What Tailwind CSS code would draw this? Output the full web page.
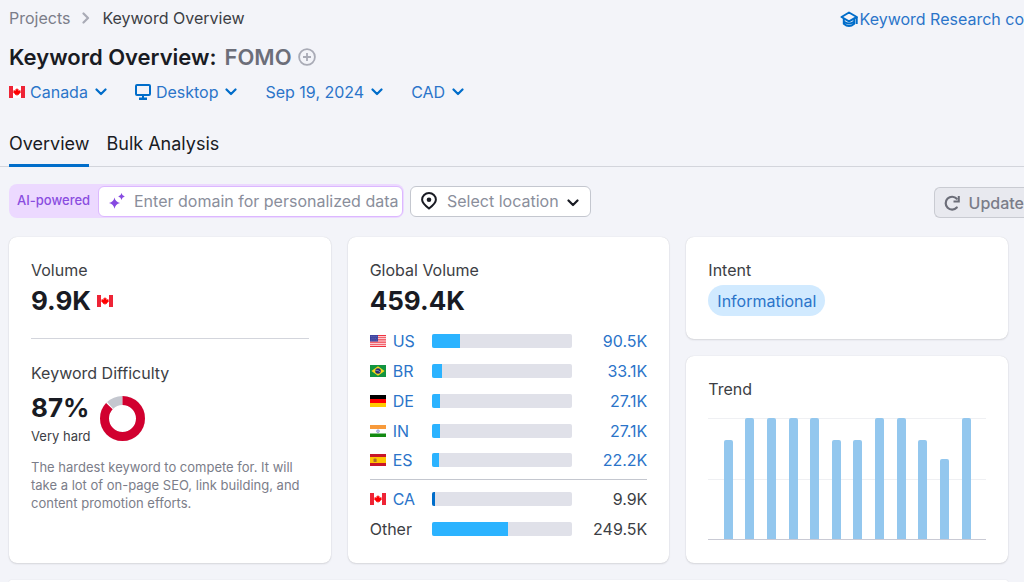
<!DOCTYPE html>
<html lang="en">
<head>
<meta charset="utf-8">
<meta name="viewport" content="width=device-width, initial-scale=1">
<title>Keyword Overview: FOMO</title>
<script src="https://cdn.jsdelivr.net/npm/@tailwindcss/browser@4"></script>
</head>
<body class="min-h-screen overflow-x-hidden bg-[#f3f4f9] font-[Inter,sans-serif] text-base text-[#3c3e44]">
<svg class="hidden" aria-hidden="true">
  <symbol id="chevron" viewBox="0 0 12 8"><path d="M1.500 1.500 6 6l4.500-4.500" fill="none" stroke="currentColor" stroke-width="2.200" stroke-linecap="round" stroke-linejoin="round"/></symbol>
  <symbol id="flag-ca" viewBox="0 0 16 12"><path fill="#fff" d="M0 0h16v12H0z"/><path fill="#ee2436" d="M0 0h4v12H0zM12 0h4v12h-4z"/><path fill="#f00" d="M8 2l.8 1.500.8-.4-.2 2 1.100-1 .3.700 1.100-.2-.5 1.500.5.400-2.200 1.700.2.800-1.600-.2V10h-.6V8.800L6.100 9l.2-.8-2.200-1.700.5-.4-.5-1.500 1.100.2.300-.7 1.100 1-.2-2 .8.400z"/></symbol>
  <symbol id="flag-us" viewBox="0 0 16 12"><path fill="#fff" d="M0 0h16v12H0z"/><path stroke="#ef3340" stroke-width="1.100" d="M0 .5h16M0 2.300h16M0 4.200h16M0 6h16M0 7.800h16M0 9.700h16M0 11.500h16"/><path fill="#3a3f9e" d="M0 0h8v6.500H0z"/><path stroke="#a9acd8" stroke-width=".7" stroke-dasharray=".7 1.200" d="M.8 1.300h7M1.700 3.200h6M.8 5.100h7"/></symbol>
  <symbol id="flag-br" viewBox="0 0 16 12"><path fill="#129440" d="M0 0h16v12H0z"/><path fill="#f8d71c" d="M8 1.300 14.600 6 8 10.700 1.400 6z"/><circle cx="8" cy="6" r="2.800" fill="#272e73"/><path d="M5.400 5.300q3-.5 5 1.800" fill="none" stroke="#b9c4dd" stroke-width=".6"/></symbol>
  <symbol id="flag-de" viewBox="0 0 16 12"><path d="M0 0h16v4H0z"/><path fill="#f00" d="M0 4h16v4H0z"/><path fill="#fc0" d="M0 8h16v4H0z"/></symbol>
  <symbol id="flag-in" viewBox="0 0 16 12"><path fill="#fff" d="M0 0h16v12H0z"/><path fill="#f79a3b" d="M0 0h16v4H0z"/><path fill="#138a12" d="M0 8.500h16V12H0z"/><circle cx="8" cy="6.200" r="1.400" fill="#c5c9ea" stroke="#7d86c6" stroke-width=".6"/></symbol>
  <symbol id="flag-es" viewBox="0 0 16 12"><path fill="#c8152a" d="M0 0h16v12H0z"/><path fill="#ffc400" d="M0 3h16v6H0z"/><path fill="#ad6a2b" d="M3.500 4.800h1l.5-.8.600.8h1V8h-3z"/></symbol>
</svg>

<header class="pl-[9px]">
  <div class="flex h-9 items-center justify-between whitespace-nowrap pt-px">
    <nav aria-label="Breadcrumb" class="flex items-center pb-[2px]">
      <a href="#" class="text-[#7b7d89]">Projects</a>
      <svg class="mx-3 h-3 w-2 text-[#a9abb6]" viewBox="0 0 8 12" aria-hidden="true"><path d="M1.500 1.500 6 6l-4.500 4.500" fill="none" stroke="currentColor" stroke-width="2.200" stroke-linecap="round" stroke-linejoin="round"/></svg>
      <span>Keyword Overview</span>
    </nav>
    <a href="#" class="flex items-center gap-[2px] text-[#2b74c9]">
      <svg class="h-[18px] w-[18px] text-[#006dca]" viewBox="0 0 18 18" aria-hidden="true"><g fill="none" stroke="currentColor" stroke-width="2" stroke-linejoin="round"><path d="M1.500 7 9 2.500 16.800 7 9 11.300z"/><path d="M3.800 8.500v5.200q5.200 4.600 10.400 0V9M4.500 12q4.500 3 9 0M16.700 7v7"/></g></svg>
      Keyword Research co
    </a>
  </div>

  <h1 class="flex h-[42px] items-center text-[22px] font-semibold text-[#191b23]">Keyword Overview:
    <span class="ml-2 text-[#6c6e79]">FOMO</span>
    <button type="button" aria-label="Add keyword" class="ml-[6px] text-[#a9abb6]">
      <svg class="block h-[18px] w-[18px]" viewBox="0 0 18 18" fill="none" stroke="currentColor" stroke-width="1.800"><circle cx="9" cy="9" r="7.900"/><path d="M9 5v8M5 9h8"/></svg>
    </button>
  </h1>

  <div class="flex h-7 items-center gap-7 text-[#2b74c9]">
    <button type="button" class="flex items-center"><svg class="mr-[5px] h-3 w-4"><use href="#flag-ca"/></svg>Canada<svg class="ml-[7px] h-2 w-3 text-[#006dca]"><use href="#chevron"/></svg></button>
    <button type="button" class="flex items-center"><svg class="mr-[5px] h-4 w-4 text-[#006dca]" viewBox="0 0 16 16"><rect x="1" y="1" width="14" height="10" rx="1" fill="none" stroke="currentColor" stroke-width="2"/><path d="M7 11h2v2.500h3V16H4v-2.500h3z" fill="currentColor"/></svg>Desktop<svg class="ml-[7px] h-2 w-3 text-[#006dca]"><use href="#chevron"/></svg></button>
    <button type="button" class="flex items-center">Sep 19, 2024<svg class="ml-[7px] h-2 w-3 text-[#006dca]"><use href="#chevron"/></svg></button>
    <button type="button" class="flex items-center">CAD<svg class="ml-[7px] h-2 w-3 text-[#006dca]"><use href="#chevron"/></svg></button>
  </div>
</header>

<nav aria-label="Reports" class="mt-[18px] flex gap-[17px] border-b border-[#d3d5dc] pl-[9px] text-lg text-[#191b23]">
  <a href="#" aria-current="page" class="-mb-px flex h-[43px] items-center border-b-3 border-[#006dca]">Overview</a>
  <a href="#" class="-mb-px flex h-[43px] items-center border-b-3 border-transparent">Bulk Analysis</a>
</nav>

<main class="pl-[9px]">
  <div class="mt-[17px] flex items-center">
    <div class="flex h-[34px] w-[395px] items-center rounded-lg bg-[#ecd9ff] pr-px">
      <label for="domain" class="w-[89px] whitespace-nowrap pl-2 text-[13px] font-medium text-[#8a4de0]">AI-powered</label>
      <div class="flex h-[31px] flex-1 items-center rounded-md border border-[#dcb8ff] bg-white pl-[10px]">
        <svg class="h-4 w-4 shrink-0 text-[#8649e1]" viewBox="0 0 16 16" fill="currentColor" aria-hidden="true"><path d="M5.500 4.500q.8 4.200 5.500 5.500-4.700 1.200-5.500 5.700Q4.700 11.200 0 10q4.700-1.300 5.500-5.500zM12.500 0q.4 2.800 3.300 3.500-2.900.7-3.300 3.400-.4-2.700-3.300-3.400 2.900-.7 3.300-3.500z"/></svg>
        <input id="domain" type="text" placeholder="Enter domain for personalized data" class="ml-[9px] w-full min-w-0 outline-none placeholder:text-[#8a8e9b]">
      </div>
    </div>
    <button type="button" class="ml-[6px] flex h-[31px] w-[181px] items-center rounded-md border border-[#c4c7cf] bg-white pl-[10px] text-[#8a8e9b]">
      <svg class="mr-[10px] h-[18px] w-4 text-[#191b23]" viewBox="0 0 16 18" aria-hidden="true"><path d="M8 16.500C3.800 13.200 1.100 11 1.100 7.700a6.900 6.700 0 0 1 13.800 0c0 3.300-2.700 5.500-6.900 8.800z" fill="none" stroke="currentColor" stroke-width="2"/><circle cx="8" cy="7.800" r="2.300" fill="currentColor"/></svg>
      Select location
      <svg class="ml-2 mt-1 h-2 w-3 text-[#191b23]"><use href="#chevron"/></svg>
    </button>
    <button type="button" class="ml-auto mt-[3px] flex h-[31px] items-center rounded-l-md border border-r-0 border-[#c9cbd2] bg-[#e8e9ef] pl-[9px] font-medium text-[#7b7d89]">
      <svg class="mr-[9px] h-4 w-4 text-[#6c6e79]" viewBox="0 0 16 16" aria-hidden="true"><path d="M12.800 12.500A6.400 6.400 0 1 1 12.800 3.800" fill="none" stroke="currentColor" stroke-width="2.200" stroke-linecap="round"/><path d="M14.800 1v5.500H9.500" fill="none" stroke="currentColor" stroke-width="2"/></svg>
      Update
    </button>
  </div>

  <div class="mt-[19px] grid grid-cols-3 gap-[17px] pr-4">
    <section class="rounded-lg bg-white px-[22px] pt-[21px] shadow-[0_0_1px_rgba(25,27,35,0.16),0_1px_2px_rgba(25,27,35,0.12)]">
      <h2 class="leading-6">Volume</h2>
      <div class="flex h-9 items-center text-[26px] font-bold text-[#191b23]">9.9K<svg class="ml-[6px] mt-[2px] h-3 w-4"><use href="#flag-ca"/></svg></div>
      <hr class="mt-5 border-[#d3d5dc]">
      <h2 class="mt-[22px] leading-6">Keyword Difficulty</h2>
      <div class="mt-1 flex gap-[9px]">
        <div>
          <div class="h-[37px] text-[26px] leading-[37px] font-bold text-[#191b23]">87%</div>
          <div class="text-[13px] leading-5">Very hard</div>
        </div>
        <svg class="mt-[7px] h-[45px] w-[45px] -rotate-90" viewBox="0 0 45 45" role="img" aria-label="Difficulty 87%"><g fill="none" stroke-width="9"><circle cx="22.500" cy="22.500" r="18" stroke="#c4c7cf"/><circle cx="22.500" cy="22.500" r="18" stroke="#fff" pathLength="100" stroke-dasharray="88 100"/><circle cx="22.500" cy="22.500" r="18" stroke="#d1002f" pathLength="100" stroke-dasharray="87 100"/></g></svg>
      </div>
      <p class="mt-3 text-[13px] leading-[18px] text-[#7b7d89]">The hardest keyword to compete for. It will take a lot of on-page SEO, link building, and content promotion efforts.</p>
    </section>

    <section class="rounded-lg bg-white px-[22px] pt-[21px] pb-[19px] shadow-[0_0_1px_rgba(25,27,35,0.16),0_1px_2px_rgba(25,27,35,0.12)]">
      <h2 class="leading-6">Global Volume</h2>
      <div class="flex h-9 items-center text-[26px] font-bold text-[#191b23]">459.4K</div>
      <table class="mt-2 w-full border-collapse text-[#2b74c9]" aria-label="Volume by country">
        <tbody>
          <tr class="h-[30px]"><th class="w-[62px] p-0 text-left font-normal"><a href="#" class="flex items-center gap-[7px]"><svg class="h-3 w-4"><use href="#flag-us"/></svg>US</a></th><td class="p-0"><div class="h-[14px] w-[140px] overflow-hidden rounded-xs bg-[#e0e1e9]"><div class="h-full bg-[#2bb3ff]" style="width:20%"></div></div></td><td class="p-0 text-right"><a href="#">90.5K</a></td></tr>
          <tr class="h-[30px]"><th class="p-0 text-left font-normal"><a href="#" class="flex items-center gap-[7px]"><svg class="h-3 w-4"><use href="#flag-br"/></svg>BR</a></th><td class="p-0"><div class="h-[14px] w-[140px] overflow-hidden rounded-xs bg-[#e0e1e9]"><div class="h-full bg-[#2bb3ff]" style="width:7.2%"></div></div></td><td class="p-0 text-right"><a href="#">33.1K</a></td></tr>
          <tr class="h-[30px]"><th class="p-0 text-left font-normal"><a href="#" class="flex items-center gap-[7px]"><svg class="h-3 w-4"><use href="#flag-de"/></svg>DE</a></th><td class="p-0"><div class="h-[14px] w-[140px] overflow-hidden rounded-xs bg-[#e0e1e9]"><div class="h-full bg-[#2bb3ff]" style="width:5.9%"></div></div></td><td class="p-0 text-right"><a href="#">27.1K</a></td></tr>
          <tr class="h-[30px]"><th class="p-0 text-left font-normal"><a href="#" class="flex items-center gap-[7px]"><svg class="h-3 w-4"><use href="#flag-in"/></svg>IN</a></th><td class="p-0"><div class="h-[14px] w-[140px] overflow-hidden rounded-xs bg-[#e0e1e9]"><div class="h-full bg-[#2bb3ff]" style="width:5.9%"></div></div></td><td class="p-0 text-right"><a href="#">27.1K</a></td></tr>
          <tr class="h-[33px] border-b border-[#c4c7cf]"><th class="p-0 pb-1 text-left font-normal"><a href="#" class="flex items-center gap-[7px]"><svg class="h-3 w-4"><use href="#flag-es"/></svg>ES</a></th><td class="p-0 pb-1"><div class="h-[14px] w-[140px] overflow-hidden rounded-xs bg-[#e0e1e9]"><div class="h-full bg-[#2bb3ff]" style="width:5%"></div></div></td><td class="p-0 pb-1 text-right"><a href="#">22.2K</a></td></tr>
          <tr class="h-[35px]"><th class="p-0 pt-1 text-left font-normal"><a href="#" class="flex items-center gap-[7px]"><svg class="h-3 w-4"><use href="#flag-ca"/></svg>CA</a></th><td class="p-0 pt-1"><div class="h-[14px] w-[140px] overflow-hidden rounded-xs bg-[#e0e1e9]"><div class="h-full bg-[#006dca]" style="width:2.6%"></div></div></td><td class="p-0 pt-1 text-right text-[#3c3e44]">9.9K</td></tr>
          <tr class="h-[30px] text-[#3c3e44]"><th class="p-0 text-left font-normal">Other</th><td class="p-0"><div class="h-[14px] w-[140px] overflow-hidden rounded-xs bg-[#e0e1e9]"><div class="h-full bg-[#2bb3ff]" style="width:54.3%"></div></div></td><td class="p-0 text-right">249.5K</td></tr>
        </tbody>
      </table>
    </section>

    <div class="flex flex-col gap-[17px]">
      <section class="rounded-lg bg-white px-[22px] pt-[21px] pb-[23px] shadow-[0_0_1px_rgba(25,27,35,0.16),0_1px_2px_rgba(25,27,35,0.12)]">
        <h2 class="leading-6">Intent</h2>
        <span class="mt-[3px] inline-flex h-[31px] items-center rounded-full bg-[#d1eaff] px-[9px] align-top text-[#2b74c9]">Informational</span>
      </section>
      <section class="flex flex-1 flex-col rounded-lg bg-white px-[22px] pt-[21px] pb-[23px] shadow-[0_0_1px_rgba(25,27,35,0.16),0_1px_2px_rgba(25,27,35,0.12)]">
        <h2 class="leading-6">Trend</h2>
        <div class="relative mt-[17px] min-h-[121px] flex-1" role="img" aria-label="Search volume trend over twelve months">
          <div class="absolute inset-0 flex flex-col border-y border-t-[#eff0f3] border-b-[#c9cad4]"><div class="flex-1 border-b border-[#eff0f3]"></div><div class="flex-1"></div></div>
          <div class="absolute inset-0 flex items-end justify-around px-[9px] pb-px">
            <div class="w-[9px] rounded-t-xs bg-[#93c7ee]" style="height:82%"></div>
            <div class="w-[9px] rounded-t-xs bg-[#93c7ee]" style="height:100%"></div>
            <div class="w-[9px] rounded-t-xs bg-[#93c7ee]" style="height:100%"></div>
            <div class="w-[9px] rounded-t-xs bg-[#93c7ee]" style="height:100%"></div>
            <div class="w-[9px] rounded-t-xs bg-[#93c7ee]" style="height:100%"></div>
            <div class="w-[9px] rounded-t-xs bg-[#93c7ee]" style="height:82%"></div>
            <div class="w-[9px] rounded-t-xs bg-[#93c7ee]" style="height:82%"></div>
            <div class="w-[9px] rounded-t-xs bg-[#93c7ee]" style="height:100%"></div>
            <div class="w-[9px] rounded-t-xs bg-[#93c7ee]" style="height:100%"></div>
            <div class="w-[9px] rounded-t-xs bg-[#93c7ee]" style="height:82%"></div>
            <div class="w-[9px] rounded-t-xs bg-[#93c7ee]" style="height:66%"></div>
            <div class="w-[9px] rounded-t-xs bg-[#93c7ee]" style="height:100%"></div>
          </div>
        </div>
      </section>
    </div>
  </div>

  <section aria-label="More metrics" class="mt-[17px] mr-4 h-[2px] rounded-t-lg bg-white shadow-[0_0_1px_rgba(25,27,35,0.16)]"></section>
</main>
</body>
</html>
